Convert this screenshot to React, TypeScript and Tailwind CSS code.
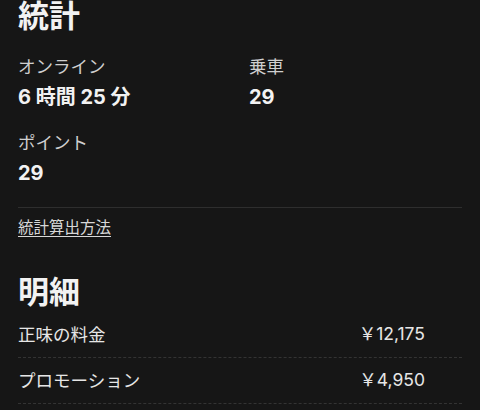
export default function App() {
  const stats = [
    { label: 'オンライン', value: '6 時間 25 分' },
    { label: '乗車', value: '29' },
    { label: 'ポイント', value: '29' },
  ]
  const rows = [
    { label: '正味の料金', value: '￥12,175' },
    { label: 'プロモーション', value: '￥4,950' },
  ]

  return (
    <div
      className="h-[410px] w-[480px] overflow-hidden bg-[#161616] px-[18px] text-[#f2f2f2]"
      style={{ fontFamily: '"Noto Sans CJK JP", "Noto Sans", sans-serif' }}
    >
      <h1 className="mt-[-6px] text-[31px] font-bold leading-[40px]">統計</h1>

      <div className="mt-[20px] grid grid-cols-[231px_1fr] gap-y-[20px]">
        {stats.map((s) => (
          <div key={s.label} className="flex flex-col">
            <span className="text-[17.5px] leading-[24px] text-[#cfcfcf]">{s.label}</span>
            <span className="mt-[6px] font-[Inter,'Noto_Sans_CJK_JP',sans-serif] text-[20px] font-bold leading-[26px]">
              {s.value}
            </span>
          </div>
        ))}
      </div>

      <div className="mt-[21px] h-px bg-[#2e2e2e]" />

      <a className="mt-[7px] inline-block text-[15.5px] leading-[22px] text-[#d8d8d8] underline underline-offset-[3px]">
        統計算出方法
      </a>

      <h2 className="mt-[32px] text-[31px] font-bold leading-[40px]">明細</h2>

      <div className="mt-[2px]">
        {rows.map((r) => (
          <div
            key={r.label}
            className="flex items-center justify-between border-b border-dashed border-[#333333] pt-[10px] pb-[11px] pr-[37px]"
          >
            <span className="text-[17.5px] leading-[24px] text-[#e6e6e6]">{r.label}</span>
            <span className="font-[Inter,'Noto_Sans_CJK_JP',sans-serif] text-[17.5px] leading-[24px] text-[#e6e6e6]">
              {r.value}
            </span>
          </div>
        ))}
      </div>
    </div>
  )
}
